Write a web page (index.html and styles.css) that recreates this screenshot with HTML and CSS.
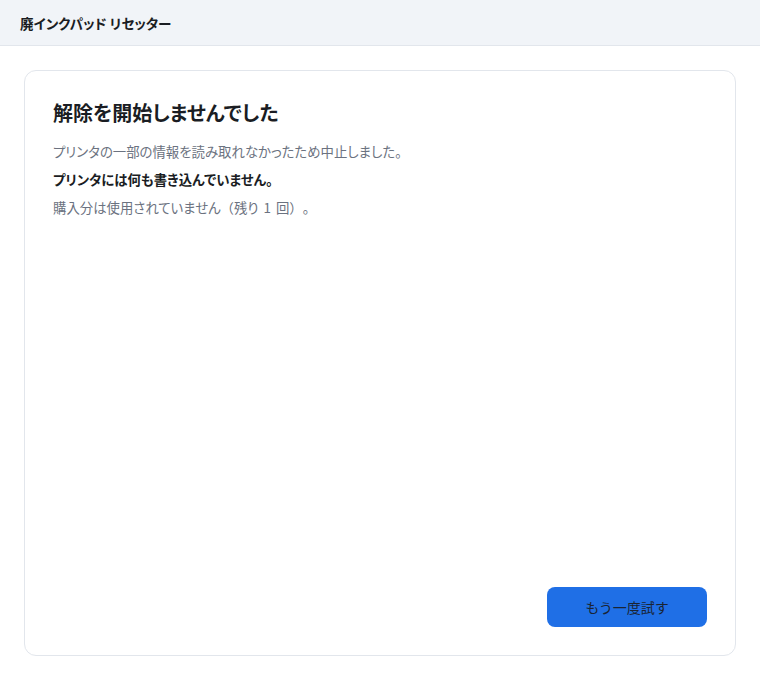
FILE: index.html
```html
<!DOCTYPE html>
<html lang="ja">
<head>
    <meta charset="utf-8">
    <link rel="stylesheet" href="styles.css">
</head>
<body>
    <header class="app-header">
        <div class="app-title">廃インクパッド リセッター</div>
    </header>

    <main class="app-main">
        <section class="card">
            <div class="card-body">
                <h1 class="card-title">解除を開始しませんでした</h1>
                <p class="note">プリンタの一部の情報を読み取れなかったため中止しました。</p>
                <p class="note note-strong">プリンタには何も書き込んでいません。</p>
                <p class="note">購入分は使用されていません<span class="wide">（</span>残り 1 回<span class="wide">）。</span></p>
            </div>
            <div class="card-actions">
                <button class="primary-button">もう一度試す</button>
            </div>
        </section>
    </main>
</body>
</html>
```

FILE: styles.css
```css
:root {
    --header-bg: #f1f4f8;
    --line: #e2e6ec;
    --text: #1a1d23;
    --muted: #6b7280;
    --accent: #1f6fe6;
}

html, body {
    height: 100%;
}

body {
    margin: 0;
    font-family: "Noto Sans CJK JP", "Noto Sans", sans-serif;
    font-feature-settings: "palt";
    color: var(--text);
    background: #ffffff;
    display: flex;
    flex-direction: column;
}

.app-header {
    height: 45px;
    background: var(--header-bg);
    border-bottom: 1px solid var(--line);
    display: flex;
    align-items: center;
    padding: 0 20px;
    flex-shrink: 0;
}

.app-title {
    font-size: 13.6px;
    font-weight: bold;
}

.app-main {
    flex: 1;
    display: flex;
    padding: 24px;
    min-height: 0;
}

.card {
    flex: 1;
    display: flex;
    flex-direction: column;
    border: 1px solid var(--line);
    border-radius: 12px;
    padding: 28px;
}

.card-body {
    flex: 1;
}

.card-title {
    margin: 0 0 14px;
    font-size: 20px;
    font-weight: bold;
    line-height: 28px;
}

.note {
    margin: 0 0 8px;
    font-size: 13.4px;
    line-height: 20px;
    color: var(--muted);
    text-spacing-trim: space-all;
    word-spacing: 2px;
}

.note .wide {
    font-feature-settings: normal;
}

.note-strong {
    color: var(--text);
    font-weight: bold;
}

.card-actions {
    display: flex;
    justify-content: flex-end;
}

.primary-button {
    width: 160px;
    height: 40px;
    border: none;
    border-radius: 8px;
    background: var(--accent);
    color: #1a2433;
    font-family: inherit;
    font-size: 14px;
    cursor: pointer;
}
```
